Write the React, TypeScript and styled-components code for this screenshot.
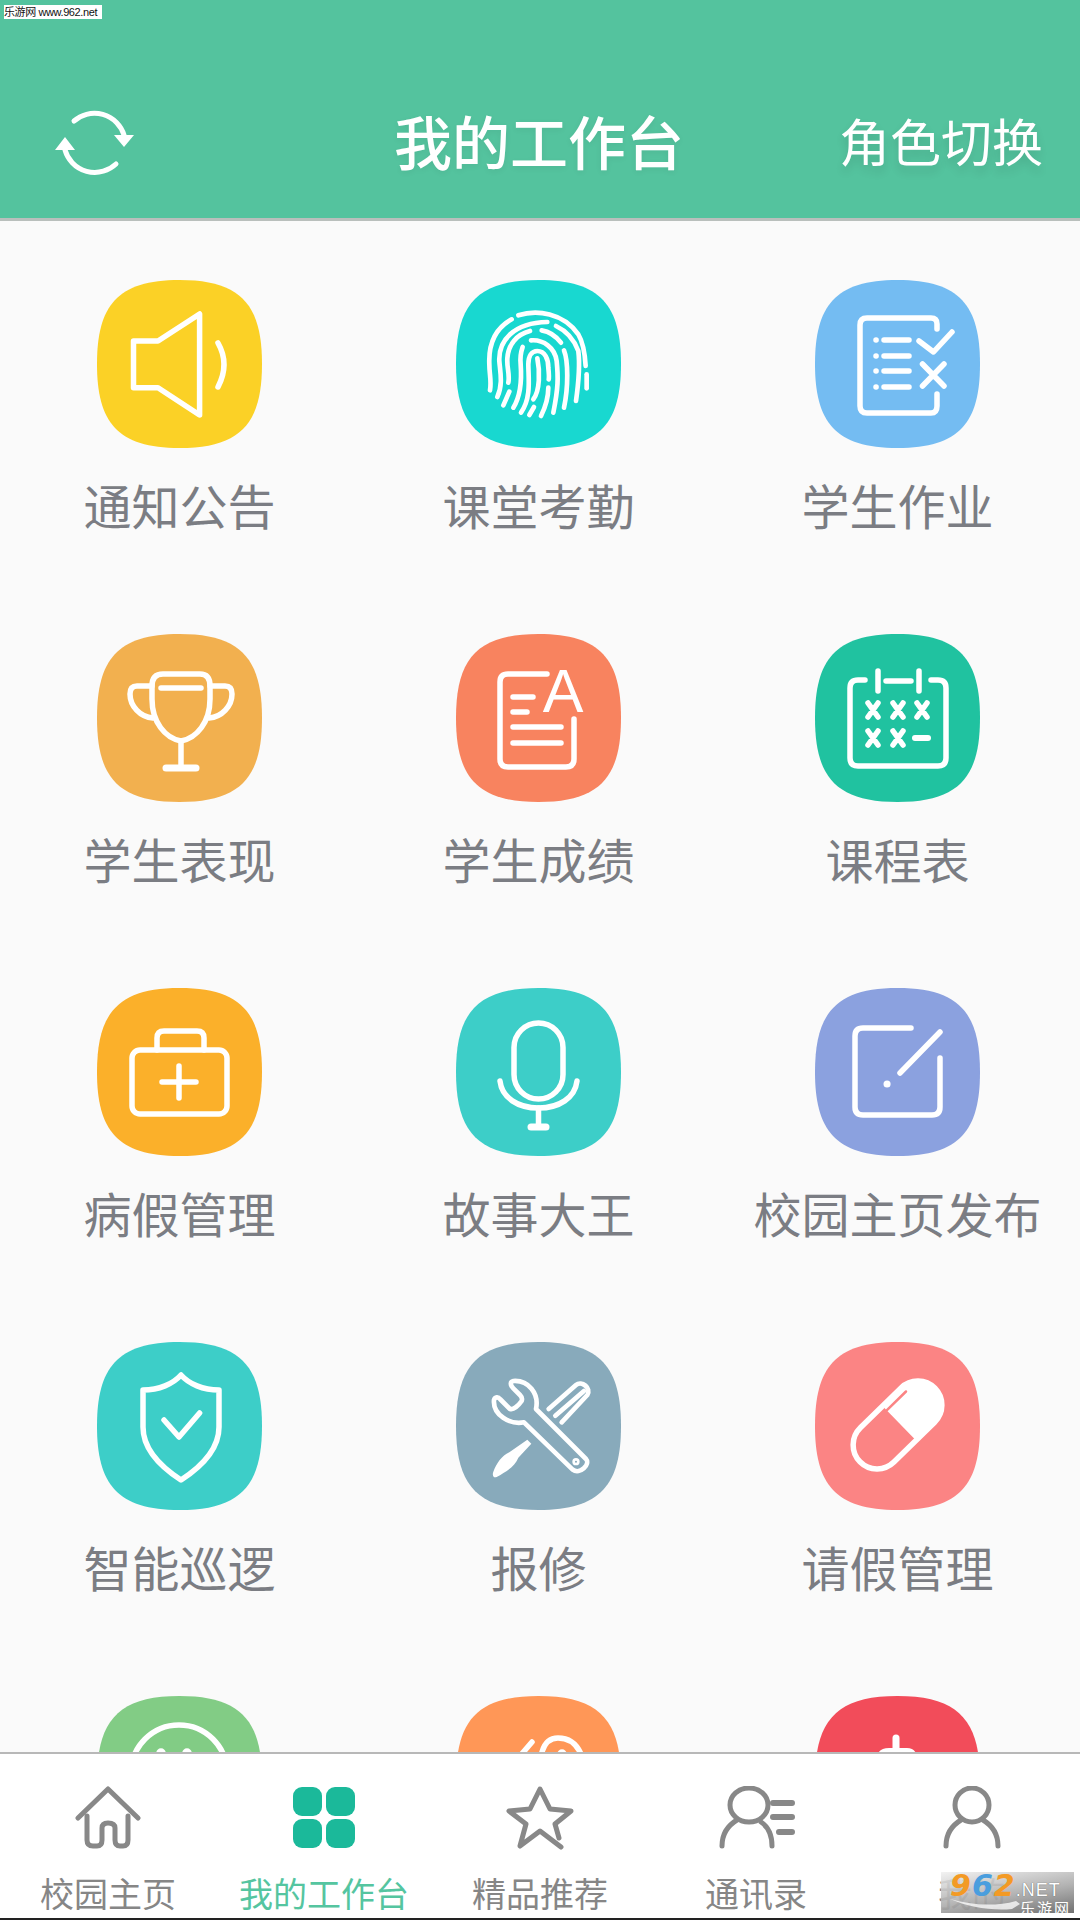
import React from "react";
import styled, { createGlobalStyle } from "styled-components";

const CJK = `"Noto Sans CJK SC", "Noto Sans", sans-serif`;

const GlobalStyle = createGlobalStyle`
  html, body {
    margin: 0;
    padding: 0;
    background: #fafafa;
  }
`;

const Page = styled.div`
  position: relative;
  width: 1080px;
  height: 1920px;
  display: flex;
  flex-direction: column;
  overflow: hidden;
  background: #fafafa;
  font-family: ${CJK};
`;

const Header = styled.header`
  height: 221px;
  box-sizing: border-box;
  flex: none;
  display: grid;
  grid-template-columns: 1fr auto 1fr;
  align-items: center;
  padding: 62px 37px 0 55px;
  background: #54c39e;
  border-bottom: 3px solid #b9bfbc;
`;

const RefreshIcon = styled.svg`
  width: 80px;
  height: 68px;
  display: block;
  margin-top: 6px;
`;

const Title = styled.h1`
  margin: 0 0 0 -20px;
  font-size: 58px;
  line-height: 76px;
  font-weight: 500;
  color: #fff;
  text-shadow: 0 2px 6px rgba(0, 0, 0, 0.06);
`;

const SwitchRole = styled.div`
  justify-self: end;
  font-size: 51px;
  line-height: 76px;
  color: #fff;
  text-shadow: 0 6px 10px rgba(0, 0, 0, 0.12);
`;

const Scroller = styled.main`
  flex: 1;
  min-height: 0;
  overflow: hidden;
`;

const Grid = styled.div`
  display: grid;
  grid-template-columns: repeat(3, 359px);
  grid-auto-rows: 354px;
  padding-top: 59px;
`;

const Item = styled.div`
  display: flex;
  flex-direction: column;
  align-items: center;
`;

const Tile = styled.svg`
  width: 165px;
  height: 168px;
  flex: none;
  display: block;
`;

const Glyph = styled.g`
  fill: none;
  stroke: #fff;
  stroke-width: 5.5;
  stroke-linecap: round;
  stroke-linejoin: round;
`;

const FineGlyph = styled.g`
  fill: none;
  stroke: #fff;
  stroke-width: 14;
  stroke-linecap: round;
  stroke-linejoin: round;
`;

const Label = styled.div`
  margin-top: 28px;
  font-size: 48px;
  line-height: 56px;
  color: #7b7d83;
  white-space: nowrap;
`;

const TabBar = styled.nav`
  flex: none;
  height: 168px;
  box-sizing: border-box;
  display: grid;
  grid-template-columns: repeat(5, 1fr);
  background: #fff;
  border-top: 2px solid #b8b8b8;
  border-bottom: 2px solid #222;
`;

const Tab = styled.div<{ $active?: boolean }>`
  display: flex;
  flex-direction: column;
  align-items: center;
  padding-top: 32px;
  font-size: 34px;
  line-height: 44px;
  color: ${(p) => (p.$active ? "#55c5a0" : "#868686")};
`;

const TabIcon = styled.svg`
  height: 64px;
  width: 80px;
  display: block;
  margin-bottom: 21px;
`;

const TabStroke = styled.g`
  fill: none;
  stroke: #888;
  stroke-width: 5;
  stroke-linecap: round;
  stroke-linejoin: round;
`;

const SiteStamp = styled.div`
  position: absolute;
  left: 4px;
  top: 5px;
  width: 98px;
  height: 14px;
  background: #fff;
  color: #111;
  font-family: "Liberation Sans", ${CJK};
  font-size: 11px;
  line-height: 14px;
  letter-spacing: -0.4px;
  white-space: nowrap;
`;

const Logo = styled.div`
  position: absolute;
  left: 941px;
  top: 1872px;
  width: 133px;
  height: 41px;
  padding: 3px 3px 0 9px;
  box-sizing: border-box;
  background: linear-gradient(
    170deg,
    rgba(240, 240, 240, 0.85) 0%,
    rgba(170, 170, 170, 0.9) 55%,
    rgba(105, 105, 105, 0.95) 100%
  );
`;

const LogoTop = styled.div`
  display: flex;
  align-items: baseline;
  height: 22px;
  line-height: 22px;
`;

const Digit = styled.span<{ $blue?: boolean }>`
  font-family: "DejaVu Sans", sans-serif;
  font-size: 30px;
  font-weight: 700;
  font-style: italic;
  letter-spacing: 1px;
  color: ${(p) => (p.$blue ? "#4a9ede" : "#f39a25")};
`;

const LogoNet = styled.span`
  font-family: "Liberation Sans", sans-serif;
  font-size: 18px;
  letter-spacing: 1px;
  color: #fff;
  text-shadow: 0 0 1px #444;
`;

const LogoSwoosh = styled.svg`
  position: absolute;
  left: 9px;
  bottom: 2px;
  width: 70px;
  height: 14px;
`;

const LogoName = styled.div`
  margin-top: 3px;
  text-align: right;
  font-size: 15px;
  line-height: 15px;
  letter-spacing: 2px;
  color: #fff;
`;

const TILE_PATH =
  "M82.5 0C145 0 165 26 165 84C165 142 145 168 82.5 168C20 168 0 142 0 84C0 26 20 0 82.5 0Z";

const speaker = (
  <Glyph>
    <path d="M36.5 61H61L102.6 34V135L61 107.7H36.5Z" />
    <path d="M121 63Q133 84 121 107" />
  </Glyph>
);

const fingerprint = (
  <g transform="translate(-6,-9) scale(.3333)">
    <FineGlyph>
      <path d="M205 133C260 115 340 125 385 190C400 215 405 250 407 285" />
      <path d="M185 145C140 170 115 215 118 280C118 310 125 330 120 358" />
      <path d="M142 378C160 340 150 300 148 270C145 210 190 155 292 153" />
      <path d="M318 165C350 180 372 205 385 240C390 280 385 340 378 390" />
      <path d="M175 335C180 310 170 290 172 262C175 220 200 190 240 180" />
      <path d="M160 403L178 362" />
      <path d="M190 410C215 370 215 320 212 280C210 260 212 245 218 228" />
      <path d="M243 208C280 205 315 230 320 270C325 320 325 350 310 425" />
      <path d="M275 178C300 182 320 198 333 215" />
      <path d="M342 238C355 270 355 350 342 410" />
      <path d="M213 425C245 380 235 320 235 280C235 255 245 240 262 240C285 240 295 265 295 290C297 310 298 320 296 325" />
      <path d="M262 262C270 300 270 360 250 385" />
      <path d="M238 432L252 408" />
      <path d="M273 435C290 400 295 375 295 350" />
      <path d="M410 310V352" />
    </FineGlyph>
  </g>
);

const checklist = (
  <Glyph>
    <path d="M122 49V44Q122 38 116 38H52Q45 38 45 45V126Q45 133 52 133H116Q122 133 122 126V114" />
    <path d="M69 60H94M69 76H94M69 91H94M69 107H94" />
    <path d="M61 60h.1M61 76h.1M61 91h.1M61 107h.1" />
    <path d="M104 61L118.5 72L137 52" />
    <path d="M107.5 84L129 106M129 84L107.5 106" />
  </Glyph>
);

const trophy = (
  <Glyph>
    <path d="M55 52Q55 40 66 40H103Q113 40 113 52V65C113 88 100 104 84 107C68 104 55 88 55 65Z" />
    <path d="M64 54H104" />
    <path d="M55 52H40Q33 52 33 60C33 72 43 83 56 84" />
    <path d="M113 52H128Q135 52 135 60C135 72 125 83 112 84" />
    <path d="M84 107V134" />
    <path d="M69 134H99" strokeWidth="7" />
  </Glyph>
);

const gradeDoc = (
  <>
    <Glyph>
      <path d="M91 40H52Q44 40 44 48V125Q44 133 52 133H110Q118 133 118 125V85" />
      <path d="M57 63H77M57 78H71M57 93H105M57 109H105" />
    </Glyph>
    <text
      x="107"
      y="78"
      textAnchor="middle"
      fontSize="61"
      fill="#fff"
      fontFamily="Liberation Sans"
    >
      A
    </text>
  </>
);

const crossAt = (x: number, y: number) =>
  `M${x - 5} ${y - 7}L${x + 5} ${y + 7}M${x + 5} ${y - 7}L${x - 5} ${y + 7}`;

const calendar = (
  <Glyph>
    <path d="M50 46H43Q35 46 35 54V124Q35 132 43 132H123Q131 132 131 124V54Q131 46 123 46H116" />
    <path d="M63 37V57M104 37V57M71 47H96" />
    <path d={[crossAt(58, 76), crossAt(83, 76), crossAt(107, 76), crossAt(58, 104), crossAt(83, 104)].join("")} />
    <path d="M100 104H113" strokeWidth="6" />
  </Glyph>
);

const medicalBag = (
  <Glyph>
    <rect x="35" y="62" width="95" height="64" rx="8" />
    <path d="M60 62V50Q60 43 67 43H100Q107 43 107 50V62" />
    <path d="M65 94H99M82 78V110" />
  </Glyph>
);

const microphone = (
  <Glyph>
    <rect x="58" y="35" width="49" height="76" rx="24.5" />
    <path d="M44 93C46 110 62 120 82.5 120C103 120 119 110 121 93" />
    <path d="M82.5 120V136" />
    <path d="M75 139H90" strokeWidth="7" />
  </Glyph>
);

const editBox = (
  <Glyph>
    <path d="M96 40H48Q40 40 40 48V119Q40 127 48 127H117Q125 127 125 119V70" />
    <path d="M125 44L85 85" />
    <path d="M72 96h.1" strokeWidth="7" />
  </Glyph>
);

const shield = (
  <Glyph>
    <path d="M84 33C76 42 62 48 46 48V85C46 108 64 125 84 138C104 125 122 108 122 85V48C106 48 92 42 84 33Z" />
    <path d="M67 78L82 95L102.6 71" />
  </Glyph>
);

const tools = (
  <g transform="translate(-6,-7) scale(.3333)">
    <FineGlyph>
      <path d="M190 138C235 135 268 175 258 222L408 372C422 388 390 420 368 404L222 262C180 270 128 240 132 195C135 185 145 185 150 192L180 222C190 225 205 212 215 198C218 190 215 185 210 180L190 160C180 150 180 140 190 138Z" />
      <path d="M296 222L378 150C395 135 425 160 412 180L335 262" />
      <path d="M316 242L402 168" />
      <circle cx="378" cy="380" r="4" />
    </FineGlyph>
    <path
      d="M232 314L244 326L205 368C195 395 165 412 140 426C130 430 126 420 130 410C140 385 155 362 178 352Z"
      fill="#fff"
    />
  </g>
);

const pill = (
  <g transform="rotate(-44.4 82.5 83)">
    <Glyph>
      <rect x="30" y="59" width="105" height="48" rx="24" />
    </Glyph>
    <path d="M85 59V107H111A24 24 0 0 0 111 59Z" fill="#fff" />
    <path d="M85 65H112" fill="none" stroke="#fb8484" strokeWidth="2.5" strokeLinecap="round" />
  </g>
);

const smile = (
  <Glyph>
    <circle cx="82" cy="77" r="48" />
    <circle cx="64" cy="57" r="2" fill="#fff" />
    <circle cx="90" cy="57" r="2" fill="#fff" />
  </Glyph>
);

const swirl = (
  <Glyph>
    <path d="M86 56Q90 42 102 42Q118 42 125 58" />
    <path d="M76 46L64 60" />
    <circle cx="106" cy="58" r="2" fill="#fff" />
  </Glyph>
);

const plusCase = (
  <>
    <Glyph>
      <path d="M81 42V60" strokeWidth="7" />
    </Glyph>
    <path d="M62 60Q64 52 74 52H92Q100 52 102 60V70H62Z" fill="#fff" />
  </>
);

const items = [
  { label: "通知公告", color: "#fbd126", icon: speaker },
  { label: "课堂考勤", color: "#18d8d0", icon: fingerprint },
  { label: "学生作业", color: "#74bcf2", icon: checklist },
  { label: "学生表现", color: "#f2b04f", icon: trophy },
  { label: "学生成绩", color: "#f8835f", icon: gradeDoc },
  { label: "课程表", color: "#20c2a0", icon: calendar },
  { label: "病假管理", color: "#fbb02a", icon: medicalBag },
  { label: "故事大王", color: "#3dcec8", icon: microphone },
  { label: "校园主页发布", color: "#8ba1df", icon: editBox },
  { label: "智能巡逻", color: "#3dcec8", icon: shield },
  { label: "报修", color: "#88aabb", icon: tools },
  { label: "请假管理", color: "#fb8484", icon: pill },
  { label: "", color: "#82cc85", icon: smile },
  { label: "", color: "#ff9757", icon: swirl },
  { label: "", color: "#f24c5a", icon: plusCase },
];

const tabs = [
  {
    label: "校园主页",
    icon: (
      <TabStroke>
        <path d="M10 32L40 3L70 32" />
        <path d="M19 30V54Q19 60 25 60H29Q34 60 34 54V42Q34 37 40 37Q47 37 47 42V54Q47 60 52 60H55Q60 60 60 54V30" />
      </TabStroke>
    ),
  },
  {
    label: "我的工作台",
    active: true,
    icon: (
      <g fill="#1bb99a">
        <rect x="9" y="1" width="29" height="29" rx="9" />
        <rect x="42" y="1" width="29" height="29" rx="9" />
        <rect x="9" y="33" width="29" height="29" rx="9" />
        <rect x="42" y="33" width="29" height="29" rx="9" />
      </g>
    ),
  },
  {
    label: "精品推荐",
    icon: (
      <TabStroke>
        <path d="M61 61L40 45L20 60L26 38L9 25L30 23L40 3L50 23L71 25L55 38L59 52" />
      </TabStroke>
    ),
  },
  {
    label: "通讯录",
    icon: (
      <TabStroke>
        <ellipse cx="33" cy="19" rx="19" ry="17" />
        <path d="M6 60C6 48 11 40 21 34M56 60C56 48 51 40 45 36" />
        <path d="M57 17H76M57 31H76M63 46H76" strokeWidth="6" />
      </TabStroke>
    ),
  },
  {
    label: "我的",
    icon: (
      <TabStroke>
        <ellipse cx="40" cy="19" rx="17" ry="17" />
        <path d="M14 60C14 48 19 40 29 34M66 60C66 48 61 40 51 34" />
      </TabStroke>
    ),
  },
];

export default function App() {
  return (
    <Page>
      <GlobalStyle />
      <Header>
        <RefreshIcon viewBox="0 0 80 68">
          <path d="M19 12A31 31 0 0 1 69 26M61 55A31 31 0 0 1 10 41" fill="none" stroke="#fff" strokeWidth="5" strokeLinecap="round" />
          <path d="M59 26H79L69 38ZM0 41H20L10 28Z" fill="#fff" />
        </RefreshIcon>
        <Title>我的工作台</Title>
        <SwitchRole>角色切换</SwitchRole>
      </Header>

      <Scroller>
        <Grid>
          {items.map((item, i) => (
            <Item key={i}>
              <Tile viewBox="0 0 165 168">
                <path d={TILE_PATH} fill={item.color} />
                {item.icon}
              </Tile>
              {item.label && <Label>{item.label}</Label>}
            </Item>
          ))}
        </Grid>
      </Scroller>

      <TabBar>
        {tabs.map((tab) => (
          <Tab key={tab.label} $active={tab.active}>
            <TabIcon viewBox="0 0 80 64">{tab.icon}</TabIcon>
            {tab.label}
          </Tab>
        ))}
      </TabBar>

      <SiteStamp>乐游网 www.962.net</SiteStamp>
      <Logo>
        <LogoTop>
          <Digit>9</Digit>
          <Digit $blue>6</Digit>
          <Digit>2</Digit>
          <LogoNet>.NET</LogoNet>
        </LogoTop>
        <LogoSwoosh viewBox="0 0 70 14">
          <path d="M0 2C20 8 45 10 66 4L70 7L62 12C42 14 18 10 0 2Z" fill="#fff" fillOpacity="0.75" />
        </LogoSwoosh>
        <LogoName>乐游网</LogoName>
      </Logo>
    </Page>
  );
}
